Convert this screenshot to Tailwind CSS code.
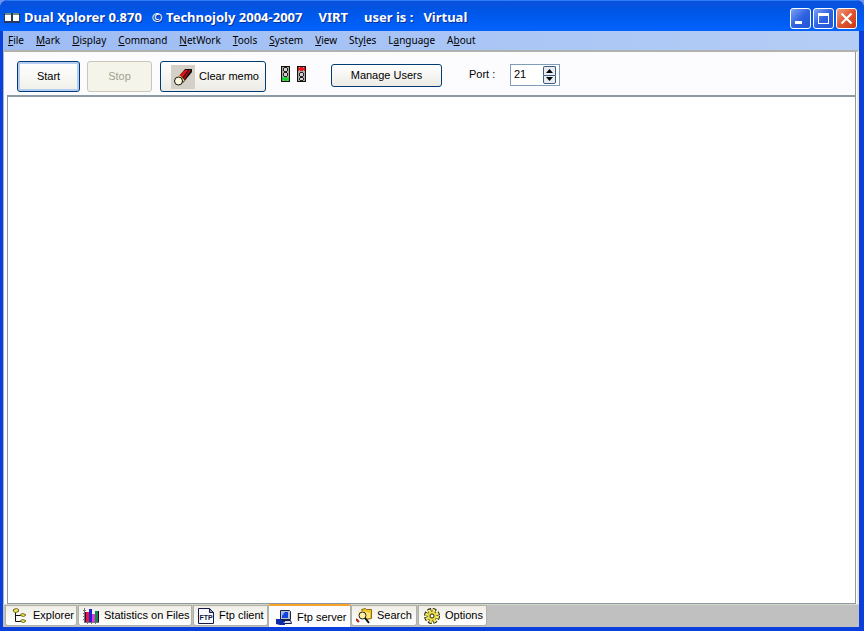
<!DOCTYPE html>
<html lang="en">

<head>
	<meta charset="UTF-8">
	<meta name="viewport" content="width=device-width, initial-scale=1.0">
	<title>Dual Xplorer</title>
	<script src="https://cdn.jsdelivr.net/npm/@tailwindcss/browser@4"></script>
</head>

<body class="min-h-screen flex flex-col bg-[#6f93f0] font-['Liberation_Sans',sans-serif] text-[11px] text-black">
	<div class="flex-1 flex flex-col rounded-t-lg overflow-hidden bg-[#0a3fdc]">
		<!-- TITLE BAR -->
		<header class="h-[31px] shrink-0 flex items-center pl-1 pr-[7px] pt-1 bg-linear-to-b from-[#0a50dc] from-0% via-[#0055e5] via-30% to-[#0061fb] to-90% border-t border-[#2c7cf5]">
			<svg class="w-4 h-4 mr-1" viewBox="0 0 16 16" shape-rendering="crispEdges">
				<path fill="#253a63" d="M0 3h16v10H0z" />
				<path fill="#6c8c86" d="M1 3h6v2H1zM9 3h6v2H9z" />
				<path fill="#fff" d="M1 5h6v6H1zM9 5h6v6H9z" />
			</svg>
			<h1 class="flex-1 flex gap-4 font-['Noto_Sans',sans-serif] font-bold text-[13px] text-white text-shadow-[1px_1px_0_#0b2f95]">
				<span class="flex gap-[10px]"><span>Dual Xplorer 0.870</span> <span>© Technojoly 2004-2007</span></span>
				<span>VIRT</span>
				<span class="flex gap-[10px]"><span>user is :</span> <span>Virtual</span></span>
			</h1>
			<div class="flex gap-[2px]">
				<button aria-label="Minimize" class="size-[21px] rounded-[3px] border border-white bg-linear-to-br from-[#7da0f5] via-[#2f62e0] to-[#2356d8]">
					<svg class="size-[19px]" viewBox="0 0 19 19"><path fill="#fff" d="M4 12h7v3H4z" /></svg>
				</button>
				<button aria-label="Maximize" class="size-[21px] rounded-[3px] border border-white bg-linear-to-br from-[#7da0f5] via-[#2f62e0] to-[#2356d8]">
					<svg class="size-[19px]" viewBox="0 0 19 19"><path fill="#fff" fill-rule="evenodd" d="M4 4h11v11H4zM5 7v7h9V7z" /></svg>
				</button>
				<button aria-label="Close" class="size-[21px] rounded-[3px] border border-white bg-linear-to-br from-[#f09a80] via-[#e0542f] to-[#c93a12]">
					<svg class="size-[19px]" viewBox="0 0 19 19"><path stroke="#fff" stroke-width="2.2" d="M4.500 4.500l10 10M14.500 4.500l-10 10" /></svg>
				</button>
			</div>
		</header>

		<div class="flex-1 flex flex-col ml-[3px] mr-[5px] mb-1 bg-[#fcfcfe]">
			<!-- MENU -->
			<nav class="h-[19px] shrink-0 flex items-center gap-3 pl-[5px] bg-linear-to-r from-[#9ebcf4] to-[#b4cdf6] font-['Noto_Sans',sans-serif] text-[10px] leading-[19px]">
				<button><u>F</u>ile</button>
				<button><u>M</u>ark</button>
				<button><u>D</u>isplay</button>
				<button><u>C</u>ommand</button>
				<button><u>N</u>etWork</button>
				<button><u>T</u>ools</button>
				<button><u>S</u>ystem</button>
				<button><u>V</u>iew</button>
				<button>Sty<u>l</u>es</button>
				<button>L<u>a</u>nguage</button>
				<button>A<u>b</u>out</button>
			</nav>

			<main class="flex-1 flex flex-col border-t-2 border-t-[#b0b2ae] border-l border-l-[#a9b8c4] border-r-2 border-r-[#ece9d8]">
				<div class="flex-1 flex flex-col mr-px border-r border-[#919b9c]">
					<!-- TOOLBAR -->
					<div class="h-[43px] shrink-0 flex items-start pl-[13px] pt-[9px]">
						<button class="w-[63px] h-[31px] rounded-[3px] border border-[#003c74] bg-linear-to-b from-white to-[#f0f0ea] inset-ring-2 inset-ring-[#b5cdf3]">Start</button>
						<button disabled class="w-[65px] h-[31px] ml-[7px] rounded-[3px] border border-[#c9c7ba] bg-[#f5f4ea] text-[#a1a192]">Stop</button>
						<button class="w-[106px] h-[31px] ml-2 pl-1 flex items-center justify-center gap-1 rounded-[3px] border border-[#003c74] bg-linear-to-b from-white to-[#ecebe5]">
							<svg class="size-6 shrink-0" viewBox="0 0 24 24">
								<path fill="#d4d0c8" d="M0 0h24v24H0z" />
								<path fill="#101010" d="M8 11L14 4h7v3l-9 11z" />
								<path fill="#e01418" d="M8 11l6-6h3l-6 8z" />
								<path fill="#a80d0d" d="M12 13l6-8h2l-7 10z" />
								<path stroke="#e7d968" stroke-width="2" d="M8 11l5 5" />
								<circle cx="7.500" cy="16" r="4" fill="#fff7dd" stroke="#111" />
							</svg>
							Clear memo
						</button>
						<svg class="w-[26px] h-4 ml-[15px] mt-[5px]" viewBox="0 0 26 16" shape-rendering="crispEdges">
							<path fill="#111" d="M0 0h9v16H0zM16 0h9v16h-9z" />
							<path fill="#a9aaa0" d="M1 1h7v14H1zM17 1h7v14h-7z" />
							<path fill="#222" d="M3 1h3v1h1v3H6v1H3V5H2V2h1zM3 6h3v1h1v3H6v1H3v-1H2V7h1zM19 6h3v1h1v3h-1v1h-3v-1h-1V7h1zM19 11h3v1h1v2h-1v1h-3v-1h-1v-2h1z" />
							<path fill="#d9cbd2" d="M3 2h3v3H3zM3 7h3v3H3zM19 7h3v3h-3zM19 12h3v2h-3z" />
							<path fill="#18d42c" d="M1 11h1v4H1zM7 11h1v4H7zM3 11h3v4H3zM2 12h5v2H2z" />
							<path fill="#e8141c" d="M17 1h1v4h-1zM23 1h1v4h-1zM19 1h3v4h-3zM18 2h5v2h-5z" />
						</svg>
						<button class="w-[111px] h-[23px] ml-6 mt-[3px] rounded-[3px] border border-[#003c74] bg-linear-to-b from-white to-[#ecebe5]">Manage Users</button>
						<label for="port" class="w-[41px] ml-[27px] mt-[5px]">Port :</label>
						<div class="w-[50px] h-[22px] mt-[3px] flex items-start border border-[#7f9db9] bg-white">
							<input id="port" type="text" value="21" class="w-8 pl-[3px] leading-[18px] outline-none">
							<div class="flex flex-col mt-px">
								<button aria-label="Increase port" class="w-[13px] h-[9px] rounded-t-[2px] border border-b-0 border-[#3d5a80] bg-[#e9edf2]">
									<svg class="w-[11px] h-2" viewBox="0 0 11 8"><path d="M2 6l3.500-4L9 6z" /></svg>
								</button>
								<button aria-label="Decrease port" class="w-[13px] h-[9px] rounded-b-[2px] border border-[#3d5a80] bg-[#e9edf2]">
									<svg class="w-[11px] h-[7px]" viewBox="0 0 11 7"><path d="M2 1h7L5.500 5z" /></svg>
								</button>
							</div>
						</div>
					</div>

					<!-- LOG -->
					<textarea aria-label="Server log" class="flex-1 ml-[3px] resize-none bg-white border-t-2 border-l border-b border-[#8c9ba3] outline-none"></textarea>
				</div>
			</main>

			<!-- TABS -->
			<div role="tablist" class="h-[23px] shrink-0 flex items-start pl-[2px] border-t border-[#d8d5c8] bg-[#c0c0c0]">
				<button role="tab" class="w-[72px] h-[21px] mr-px flex items-center gap-[5px] pl-[6px] rounded-b-[3px] border border-[#b0b2a8] bg-linear-to-b from-[#efeee6] to-white whitespace-nowrap">
					<svg class="size-4 shrink-0" viewBox="0 0 16 16">
						<path fill="none" stroke="#111" d="M3.500 4v9.500H10M3.500 7.500H9" />
						<g fill="#f2e45c" stroke="#6b6415">
							<path d="M1.500 1.500l3-1 2 1v2l-3 1-2-1z" />
							<path d="M8.500 6.500l2-1 3 1v1l-2 1-3-1z" />
							<path d="M8.500 12.500l2-1 3 1v1l-2 1-3-1z" />
						</g>
					</svg>
					Explorer
				</button>
				<button role="tab" class="w-[114px] h-[21px] mr-px flex items-center gap-[5px] pl-1 rounded-b-[3px] border border-[#b0b2a8] bg-linear-to-b from-[#efeee6] to-white whitespace-nowrap">
					<svg class="size-4 shrink-0" viewBox="0 0 16 16" shape-rendering="crispEdges">
						<path fill="#777" d="M1 0h1v14h14v1H1zM0 2h3v1H0zM0 5h3v1H0zM0 8h3v1H0zM0 11h3v1H0zM4 13h1v3H4zM8 13h1v3H8zM12 13h1v3h-1z" />
						<path fill="#e81845" d="M3 4h3v10H3z" />
						<path fill="#2020d8" d="M6 1h3v13H6z" />
						<path fill="#e13bd5" d="M9 6h3v8H9z" />
						<path fill="#158645" d="M12 3h3v11h-3z" />
						<path fill="#300040" d="M2 4h1v10H2zM15 3h1v11h-1z" />
					</svg>
					Statistics on Files
				</button>
				<button role="tab" class="w-[75px] h-[21px] flex items-center gap-[5px] pl-1 rounded-b-[3px] border border-[#b0b2a8] bg-linear-to-b from-[#efeee6] to-white whitespace-nowrap">
					<svg class="size-4 shrink-0" viewBox="0 0 16 16">
						<path fill="#f7f8ff" stroke="#161a45" d="M.5 .5h11l4 4v11H.5z" />
						<path fill="#9da5c9" stroke="#161a45" d="M11.500 .5v4h4z" />
						<text x="8" y="12" text-anchor="middle" font-size="7" font-weight="bold" fill="#111640">FTP</text>
					</svg>
					Ftp client
				</button>
				<button role="tab" aria-selected="true" class="w-[83px] h-[23px] -mt-px flex items-center gap-1 pl-[7px] pt-[2px] rounded-t-[2px] border-t-2 border-x border-t-[#f5a32a] border-x-[#b0b2a8] bg-[#fcfcfe] whitespace-nowrap">
					<svg class="w-[17px] h-4 shrink-0" viewBox="0 0 17 16">
						<path fill="#b9c2cf" stroke="#15204d" d="M4.500 .5h9l1 1v8h-10z" />
						<path fill="#1645db" d="M6 2h6v6H6z" />
						<path fill="#85b4ff" d="M6 2h3L6 6z" />
						<path fill="#d9dde5" stroke="#15204d" d="M5.500 10.500h9l1 3h-10z" />
						<path fill="#0b2ba8" d="M0 9h4l3 2h2v1H7l2 1v2H4l-4-1z" />
					</svg>
					Ftp server
				</button>
				<button role="tab" class="w-[66px] h-[21px] mr-px flex items-center gap-[5px] pl-1 rounded-b-[3px] border border-[#b0b2a8] bg-linear-to-b from-[#efeee6] to-white whitespace-nowrap">
					<svg class="size-4 shrink-0" viewBox="0 0 16 16">
						<path fill="#f1c528" stroke="#8b6a12" d="M5.500 1.500l4-1 1 1h5v9l-6 1z" />
						<path fill="#ffe779" d="M2 4l4-1 8 2v5H3z" />
						<circle cx="6.500" cy="7.500" r="3.500" fill="#fff3a6" stroke="#222" />
						<path stroke="#111" stroke-width="2" d="M9 10l4 5" />
						<path stroke="#b71d16" stroke-width="2" d="M0 11l3 3" />
					</svg>
					Search
				</button>
				<button role="tab" class="w-[69px] h-[21px] flex items-center gap-[5px] pl-[5px] rounded-b-[3px] border border-[#b0b2a8] bg-linear-to-b from-[#efeee6] to-white whitespace-nowrap">
					<svg class="size-4 shrink-0" viewBox="0 0 16 16">
						<circle cx="8" cy="8" r="6" fill="none" stroke="#201e05" stroke-width="4" stroke-dasharray="3.200 1.512" />
						<circle cx="8" cy="8" r="5" fill="#e5d743" stroke="#514b0b" />
						<circle cx="8" cy="8" r="5.500" fill="none" stroke="#f3e966" stroke-width="3" stroke-dasharray="2.400 1.920" />
						<circle cx="8" cy="8" r="2" fill="#fff" stroke="#29270a" />
					</svg>
					Options
				</button>
			</div>
		</div>
	</div>
</body>

</html>
